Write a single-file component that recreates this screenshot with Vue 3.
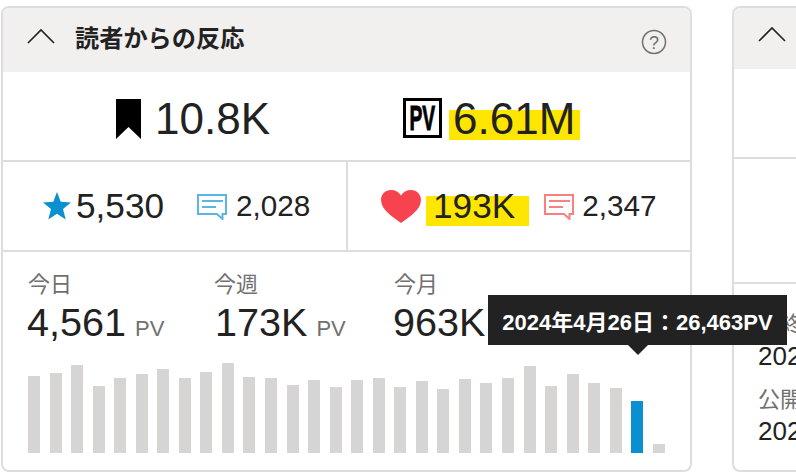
<style>
html, body { margin: 0; background: #fff; }
</style>

<style scoped>
.page {
  position: relative;
  width: 796px;
  height: 472px;
  overflow: hidden;
  display: flex;
  gap: 40px;
  padding: 6px 0 0 1px;
  box-sizing: border-box;
  font-family: "Liberation Sans", "Noto Sans CJK JP", sans-serif;
  color: #222;
}

.card {
  flex: none;
  width: 691px;
  height: 466px;
  box-sizing: border-box;
  border: 2px solid #ddd;
  border-radius: 8px;
  overflow: hidden;
}
.card.side {
  width: 200px;
}

.head {
  height: 64px;
  background: #f1f0ef;
  display: flex;
  align-items: center;
  padding: 0 24px;
  position: relative;
}
.side .head {
  height: 61px;
}
.chevron {
  width: 28px;
  height: 16px;
  margin-right: 20px;
  margin-top: -9px;
}
.title {
  font-size: 24.2px;
  font-weight: bold;
  margin-top: -8px;
}
.help {
  width: 26px;
  height: 26px;
  margin-left: auto;
  margin-right: -1px;
  margin-top: 4px;
}

.totals {
  height: 90px;
  border-bottom: 2px solid #ddd;
  display: flex;
  align-items: center;
  padding: 5px 0 0 113px;
  box-sizing: border-box;
}
.total {
  display: flex;
  align-items: center;
  font-size: 44px;
}
.total.bookmark {
  gap: 14px;
  width: 287px;
}
.total.views {
  gap: 7px;
}
.mark {
  background: linear-gradient(to bottom, transparent 30%, #ffe600 30%, #ffe600 97%, transparent 97%);
  line-height: 44px;
}
.mark.pv {
  padding: 0 5px 0 4px;
}

.pv-box {
  flex: none;
  width: 39px;
  height: 40px;
  margin-top: -2px;
  box-sizing: border-box;
  border: 3px solid #000;
  display: flex;
  align-items: center;
  justify-content: center;
  font-size: 35px;
  line-height: 34px;
  font-weight: bold;
  color: #000;
  overflow: hidden;
}
.pv-box span {
  display: block;
  transform: scaleX(0.55);
  -webkit-text-stroke: 1px #000;
}

.reactions {
  height: 88px;
  border-bottom: 2px solid #ddd;
  display: flex;
}
.reaction {
  flex: none;
  width: 343px;
  display: flex;
  align-items: center;
  padding-left: 40px;
  box-sizing: border-box;
}
.reaction + .reaction {
  width: 344px;
  padding-left: 33px;
  border-left: 2px solid #ddd;
}
.big {
  font-size: 35.2px;
  margin-left: 5px;
}
.big.mark {
  padding: 0 14px 0 7px;
  background: linear-gradient(to bottom, transparent 27%, #ffe600 27%, #ffe600 95%, transparent 95%);
}
.small {
  font-size: 29.7px;
  margin-left: 9px;
}
.bubble {
  flex: none;
  margin-left: 33px;
  width: 30px;
  height: 26px;
  margin-top: 1px;
}
.mark + .bubble {
  margin-left: 15px;
}
.mark + .bubble + .small {
  margin-left: 8px;
}

.stats {
  padding: 20px 25px 0;
}
.periods {
  display: flex;
}
.period {
  flex: none;
  width: 186px;
}
.period.week {
  width: 180px;
}
.period-label {
  font-size: 22px;
  line-height: 26px;
  color: #707070;
}
.period-value {
  font-size: 39.6px;
  line-height: 44px;
  margin-top: 2px;
  margin-left: -1px;
}
.period.week .period-value {
  margin-left: 1px;
}
.unit {
  font-size: 22px;
  color: #707070;
  margin-left: -2px;
}

.bars {
  margin-top: 12px;
  height: 90px;
  display: flex;
  justify-content: space-between;
  align-items: flex-end;
  width: 637px;
}
.bar {
  width: 12px;
  background: #d6d5d4;
}
.bar.active {
  background: #0a8fd0;
}

.side-row {
  height: 88px;
  border-bottom: 2px solid #ddd;
}
.side-row.tall {
  height: 123px;
}
.side-body {
  padding: 28px 24px 0;
}
.side-label {
  font-size: 22px;
  line-height: 26px;
  color: #707070;
}
.side-value {
  font-size: 26px;
  line-height: 30px;
  margin-top: 3px;
  margin-bottom: 16px;
}

.tooltip {
  position: absolute;
  left: 488px;
  top: 295px;
  width: 299px;
  height: 50px;
  background: #222;
  color: #fff;
  font-size: 22px;
  font-weight: bold;
  display: flex;
  align-items: center;
  justify-content: center;
  white-space: nowrap;
}
.tooltip::after {
  content: "";
  position: absolute;
  left: 140px;
  top: 50px;
  border-left: 10px solid transparent;
  border-right: 10px solid transparent;
  border-top: 10px solid #222;
}
</style>

<template>
  <div class="page">
    <section class="card">
      <header class="head">
        <svg class="chevron" viewBox="0 0 28 16">
          <path d="M1 15 14 2l13 13" fill="none" stroke="#222" stroke-width="1.6" />
        </svg>
        <span class="title">読者からの反応</span>
        <svg class="help" viewBox="0 0 26 26">
          <circle cx="13" cy="13" r="11.5" fill="none" stroke="#707070" stroke-width="1.5" />
          <text x="13" y="19.500" text-anchor="middle" font-size="18" fill="#707070">?</text>
        </svg>
      </header>

      <div class="totals">
        <div class="total bookmark">
          <svg width="25" height="40" viewBox="0 0 25 40">
            <path d="M0 0h25v40L12.5 28 0 40z" fill="#000" />
          </svg>
          <span>10.8K</span>
        </div>
        <div class="total views">
          <div class="pv-box"><span>PV</span></div>
          <span class="mark pv">6.61M</span>
        </div>
      </div>

      <div class="reactions">
        <div class="reaction">
          <svg width="28" height="28" viewBox="0 0 28 28">
            <path d="M14 0l3.700 9.800L28 10.500l-8 6.500 2.700 10.500L14 21.700 5.300 27.500 8 17 0 10.500l10.300-.7z" fill="#0a8fd0" />
          </svg>
          <span class="big">5,530</span>
          <svg class="bubble" viewBox="0 0 30 26">
            <path d="M1 1h28v19h-3.500v5L20 20H1z" fill="none" stroke="#5ab4e6" stroke-width="2" />
            <path d="M5 7h21M5 13h14" stroke="#5ab4e6" stroke-width="2" />
          </svg>
          <span class="small">2,028</span>
        </div>
        <div class="reaction">
          <svg width="40" height="33" viewBox="0 0 40 33">
            <path d="M20 33C12 27 0 20 0 10 0 4 4.500 0 10 0c4.500 0 8 2 10 5.500C22 2 25.500 0 30 0c5.500 0 10 4 10 10 0 10-12 17-20 23z" fill="#f6434f" />
          </svg>
          <span class="big mark">193K</span>
          <svg class="bubble" viewBox="0 0 30 26">
            <path d="M1 1h28v19h-3.500v5L20 20H1z" fill="none" stroke="#f98080" stroke-width="2" />
            <path d="M5 7h21M5 13h14" stroke="#f98080" stroke-width="2" />
          </svg>
          <span class="small">2,347</span>
        </div>
      </div>

      <div class="stats">
        <div class="periods">
          <div v-for="p in periods" :key="p.label" class="period" :class="p.cls">
            <div class="period-label">{{ p.label }}</div>
            <div class="period-value">{{ p.value }} <span class="unit">PV</span></div>
          </div>
        </div>
        <div class="bars">
          <div
            v-for="(h, i) in bars"
            :key="i"
            class="bar"
            :class="{ active: i === 28 }"
            :style="{ height: h + 'px' }"
          ></div>
        </div>
      </div>
    </section>

    <section class="card side">
      <header class="head">
        <svg class="chevron" viewBox="0 0 28 16">
          <path d="M1 15 14 2l13 13" fill="none" stroke="#222" stroke-width="1.6" />
        </svg>
      </header>
      <div class="side-row"></div>
      <div class="side-row tall"></div>
      <div class="side-body">
        <div class="side-label">最終</div>
        <div class="side-value">2024</div>
        <div class="side-label">公開</div>
        <div class="side-value">2024</div>
      </div>
    </section>

    <div class="tooltip">2024年4月26日：26,463PV</div>
  </div>
</template>

<script setup>
const periods = [
  { label: "今日", value: "4,561", cls: "" },
  { label: "今週", value: "173K", cls: "week" },
  { label: "今月", value: "963K", cls: "" },
];

const bars = [
  77, 80, 88, 67, 75, 79, 84, 75, 81, 90, 76, 75, 68, 73, 66, 73, 75, 66, 72, 64,
  74, 70, 75, 87, 67, 79, 70, 65, 52, 9,
];
</script>
